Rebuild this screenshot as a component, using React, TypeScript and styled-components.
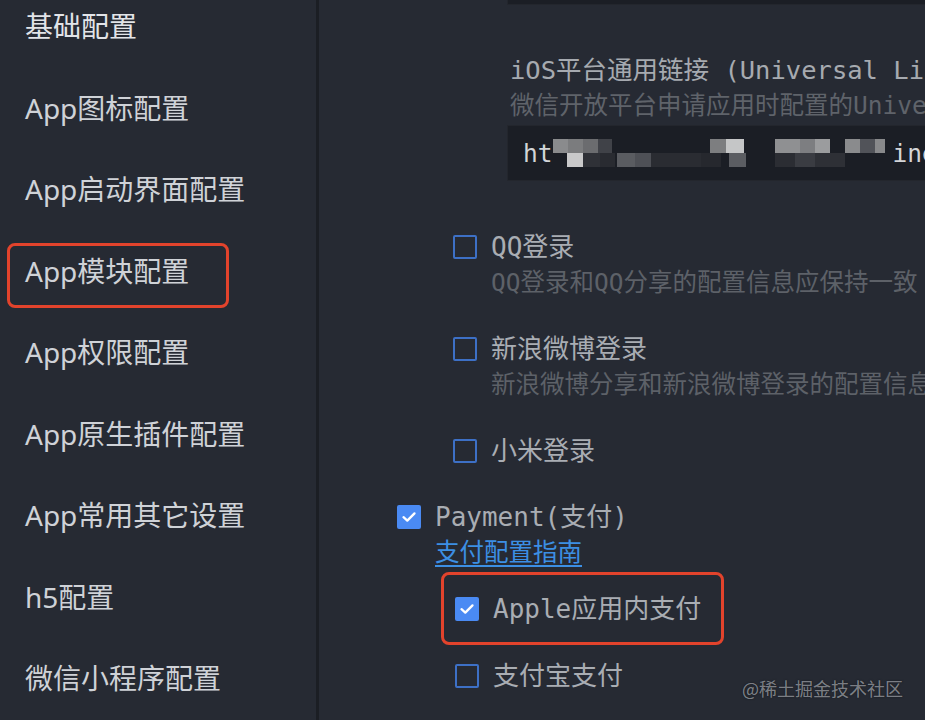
import React from "react";
import styled, { createGlobalStyle } from "styled-components";

const GlobalStyle = createGlobalStyle`
  html, body { margin: 0; padding: 0; background: #262a33; }
  body { overflow: hidden; }
  #root { width: 925px; height: 720px; }
`;

const Page = styled.div`
  position: relative;
  display: flex;
  width: 925px;
  height: 720px;
  overflow: hidden;
  background: #262a33;
`;

const Sidebar = styled.nav`
  width: 316px;
  flex-shrink: 0;
  display: flex;
  flex-direction: column;
  overflow: hidden;
`;

const NavList = styled.ul`
  list-style: none;
  margin: -15.75px 0 0;
  padding: 0;
  display: flex;
  flex-direction: column;
`;

const NavItem = styled.li<{ $primary?: boolean }>`
  position: relative;
  height: 81.5px;
  display: flex;
  align-items: center;
  padding-left: 25px;
  font-family: "Noto Sans", "Noto Sans CJK SC", sans-serif;
  font-size: 28px;
  color: ${(p) => (p.$primary ? "#e2e4e8" : "#cfd2d7")};
  white-space: nowrap;
`;

const Highlight = styled.span<{ $top: number; $left: number; $w: number; $h: number }>`
  position: absolute;
  top: ${(p) => p.$top}px;
  left: ${(p) => p.$left}px;
  width: ${(p) => p.$w}px;
  height: ${(p) => p.$h}px;
  box-sizing: border-box;
  border: 3px solid #e2432c;
  border-radius: 8px;
  pointer-events: none;
`;

const Divider = styled.div`
  width: 3px;
  flex-shrink: 0;
  background: #1b1e24;
`;

const Main = styled.main`
  flex: 1;
  min-width: 0;
  display: flex;
  flex-direction: column;
  overflow: hidden;
  font-family: "DejaVu Sans Mono", "Noto Sans CJK SC", monospace;
`;

const Field = styled.div<{ $offset: number }>`
  margin-left: 188px;
  margin-top: ${(p) => p.$offset}px;
  width: 640px;
  height: 56px;
  flex-shrink: 0;
  box-sizing: border-box;
  background: #1b1e25;
  border: 1px solid #23262d;
  display: flex;
  align-items: center;
  padding-left: 15px;
  font-size: 24.5px;
  color: #d3d5d8;
  white-space: nowrap;
  overflow: hidden;
`;

const FieldLabel = styled.div<{ $muted?: boolean; $gap?: number }>`
  margin-left: 191px;
  margin-top: ${(p) => p.$gap ?? 0}px;
  line-height: 36px;
  font-size: ${(p) => (p.$muted ? "24.5px" : "25.5px")};
  color: ${(p) => (p.$muted ? "#5f636a" : "#a6aab0")};
  white-space: nowrap;
`;

const Group = styled.div<{ $indent: number; $gap: number; $top: number }>`
  margin-left: ${(p) => p.$indent}px;
  margin-top: ${(p) => p.$top}px;
  display: flex;
  flex-direction: column;
  gap: ${(p) => p.$gap}px;
`;

const Option = styled.div`
  position: relative;
  display: flex;
  align-items: flex-start;
  gap: 14px;
`;

const Box = styled.span<{ $checked?: boolean }>`
  width: 24px;
  height: 24px;
  margin-top: 6px;
  flex-shrink: 0;
  box-sizing: border-box;
  border-radius: 2px;
  border: ${(p) => (p.$checked ? "none" : "2px solid #3d70c6")};
  background: ${(p) => (p.$checked ? "#4a8af3" : "transparent")};
  display: flex;
  align-items: center;
  justify-content: center;
`;

const OptionText = styled.div`
  display: flex;
  flex-direction: column;
  white-space: nowrap;
`;

const Title = styled.span`
  line-height: 36px;
  font-size: 26px;
  color: #a9adb3;
`;

const Desc = styled.span`
  line-height: 36px;
  font-size: 24.5px;
  color: #5d6168;
`;

const GuideLink = styled.a`
  line-height: 36px;
  font-size: 24.5px;
  color: #3c8fe4;
  text-decoration: underline;
  text-decoration-thickness: 2px;
  text-underline-offset: 4px;
  cursor: pointer;
`;

const Watermark = styled.div`
  position: absolute;
  right: 22px;
  top: 676px;
  font-family: "Noto Sans CJK SC", sans-serif;
  font-size: 18px;
  line-height: 24px;
  color: rgba(190, 193, 199, 0.62);
  text-shadow: 0 0 2px rgba(0, 0, 0, 0.5);
  pointer-events: none;
`;

const Check = () => (
  <svg width="18" height="18" viewBox="0 0 18 18" fill="none">
    <path d="M3.5 9.2 L7.3 12.6 L14.5 5.4" stroke="#fff" strokeWidth="2.3" strokeLinecap="round" strokeLinejoin="round" />
  </svg>
);

type Blk = [number, number, number, number, string];
const mosaic: Blk[] = [
  [0, 0, 15, 14, "#8a8b8d"],
  [15, 0, 15, 14, "#7b7c7e"],
  [30, 0, 15, 14, "#6b6c6f"],
  [45, 0, 14, 14, "#404248"],
  [14, 14, 16, 14, "#c9c9ca"],
  [30, 14, 17, 14, "#2f3137"],
  [47, 14, 15, 14, "#292b31"],
  [64, 14, 18, 14, "#5a5c61"],
  [82, 14, 16, 14, "#4e5056"],
  [98, 14, 50, 14, "#2a2c32"],
  [148, 14, 20, 14, "#26282e"],
  [157, 0, 16, 14, "#7d7e80"],
  [173, 0, 18, 14, "#c5c6c7"],
  [176, 14, 17, 14, "#5b5d62"],
  [222, 0, 25, 14, "#8f9092"],
  [247, 0, 15, 14, "#7d7e81"],
  [262, 0, 15, 14, "#9b9c9e"],
  [222, 14, 20, 14, "#2b2d33"],
  [242, 14, 20, 14, "#3a3c42"],
  [262, 14, 30, 14, "#2e3036"],
  [292, 0, 15, 14, "#8a8b8d"],
  [307, 0, 15, 14, "#515359"],
  [322, 0, 10, 14, "#88898b"],
];

const Mosaic = () => (
  <svg width="340" height="28" viewBox="0 0 340 28" style={{ flexShrink: 0 }}>
    {mosaic.map(([x, y, w, h, c], i) => (
      <rect key={i} x={x} y={y} width={w} height={h} fill={c} />
    ))}
  </svg>
);

const nav = [
  "基础配置",
  "App图标配置",
  "App启动界面配置",
  "App模块配置",
  "App权限配置",
  "App原生插件配置",
  "App常用其它设置",
  "h5配置",
  "微信小程序配置",
];

const logins = [
  { title: "QQ登录", desc: "QQ登录和QQ分享的配置信息应保持一致" },
  { title: "新浪微博登录", desc: "新浪微博分享和新浪微博登录的配置信息应保持一致" },
  { title: "小米登录" },
];

export default function App() {
  return (
    <>
      <GlobalStyle />
      <Page>
        <Sidebar>
          <NavList>
            {nav.map((n, i) => (
              <NavItem key={n} $primary={i === 0}>
                {n}
                {i === 3 && <Highlight $top={14} $left={7} $w={222} $h={65} />}
              </NavItem>
            ))}
          </NavList>
        </Sidebar>
        <Divider />
        <Main>
          <Field $offset={-51} />
          <FieldLabel $gap={47}>iOS平台通用链接 (Universal Links)</FieldLabel>
          <FieldLabel $muted>微信开放平台申请应用时配置的Universal Links</FieldLabel>
          <Field $offset={1}>
            <span>ht</span>
            <Mosaic />
            <span>ine/</span>
          </Field>

          <Group $indent={134} $gap={30} $top={48}>
            {logins.map((l) => (
              <Option key={l.title}>
                <Box />
                <OptionText>
                  <Title>{l.title}</Title>
                  {l.desc && <Desc>{l.desc}</Desc>}
                </OptionText>
              </Option>
            ))}
          </Group>

          <Group $indent={78} $gap={0} $top={30}>
            <Option>
              <Box $checked>
                <Check />
              </Box>
              <OptionText>
                <Title>Payment(支付)</Title>
                <GuideLink>支付配置指南</GuideLink>
              </OptionText>
            </Option>
            <Group $indent={58} $gap={31} $top={20}>
              <Option>
                <Box $checked>
                  <Check />
                </Box>
                <OptionText>
                  <Title>Apple应用内支付</Title>
                </OptionText>
                <Highlight $top={-19} $left={-14} $w={283} $h={73} />
              </Option>
              <Option>
                <Box />
                <OptionText>
                  <Title>支付宝支付</Title>
                </OptionText>
              </Option>
            </Group>
          </Group>
        </Main>
        <Watermark>@稀土掘金技术社区</Watermark>
      </Page>
    </>
  );
}
